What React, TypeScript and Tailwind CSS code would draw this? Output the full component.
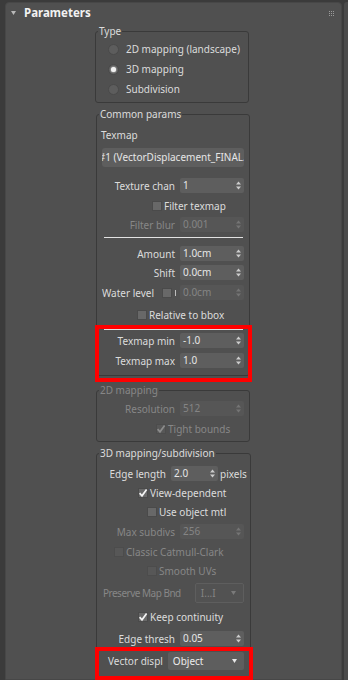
import React from 'react'

// 3ds Max style "Parameters" rollout (Displacement / Vector displacement)

const TXT = 'text-[#dcdcdc]'
const DIM = 'text-[#878787]'

const Arrows = ({ dim = false }: { dim?: boolean }) => (
  <svg width="5" height="9" viewBox="0 0 5 9" className="shrink-0">
    <path d="M0 3.5L2.5 0.5L5 3.5Z" fill={dim ? '#757575' : '#cdcdcd'} />
    <path d="M0 5.5L5 5.5L2.5 8.5Z" fill={dim ? '#757575' : '#cdcdcd'} />
  </svg>
)

const Caret = ({ dim = false }: { dim?: boolean }) => (
  <svg width="5" height="4" viewBox="0 0 5 4" className="shrink-0">
    <path d="M0 0L5 0L2.5 4Z" fill={dim ? '#7a7a7a' : '#e8e8e8'} />
  </svg>
)

const Spinner = ({
  value,
  disabled = false,
  className = 'w-[64px]',
}: {
  value: string
  disabled?: boolean
  className?: string
}) => (
  <div
    className={`${className} h-[15px] shrink-0 flex items-center justify-between pl-[3px] pr-[3px] rounded-[2px] ${
      disabled ? 'bg-[#565656] text-[#858585]' : 'bg-[#5e5e5e] text-[#e6e6e6]'
    }`}
  >
    <span className="leading-[15px] whitespace-nowrap">{value}</span>
    <Arrows dim={disabled} />
  </div>
)

const SpinRow = ({
  label,
  value,
  disabled = false,
  className = '',
}: {
  label: string
  value: string
  disabled?: boolean
  className?: string
}) => (
  <div className={`flex items-center h-[15px] ${className}`}>
    <span className={`w-[74px] text-right leading-[14px] whitespace-nowrap ${disabled ? DIM : TXT}`}>{label}</span>
    <Spinner value={value} disabled={disabled} className="ml-[5px] w-[64px]" />
  </div>
)

const Box = ({ checked = false, disabled = false }: { checked?: boolean; disabled?: boolean }) => (
  <span
    className={`w-[10px] h-[10px] shrink-0 flex items-center justify-center border ${
      disabled ? 'bg-[#575757] border-[#4c4c4c]' : 'bg-[#686868] border-[#4a4a4a]'
    }`}
  >
    {checked && (
      <svg width="10" height="10" viewBox="0 0 10 10" className="shrink-0 overflow-visible">
        <path
          d="M1.6 5.2L4 7.8L8.6 1.6"
          fill="none"
          stroke={disabled ? '#8c8c8c' : '#f4f4f4'}
          strokeWidth="1.7"
        />
      </svg>
    )}
  </span>
)

const CheckRow = ({
  label,
  checked = false,
  disabled = false,
  className = '',
}: {
  label: string
  checked?: boolean
  disabled?: boolean
  className?: string
}) => (
  <div className={`flex items-center h-[14px] ${className}`}>
    <Box checked={checked} disabled={disabled} />
    <span className={`ml-[2px] leading-[14px] whitespace-nowrap ${disabled ? DIM : TXT}`}>{label}</span>
  </div>
)

const RadioRow = ({ label, on = false, className = '' }: { label: string; on?: boolean; className?: string }) => (
  <div className={`flex items-center h-[14px] ${className}`}>
    <span className="w-[11px] h-[11px] rounded-full bg-[#5d5d5d] border border-[#4a4a4a] flex items-center justify-center shrink-0">
      {on && <span className="w-[5px] h-[5px] rounded-full bg-[#f2f2f2] shadow-[0_0_2px_#ffffff]" />}
    </span>
    <span className={`ml-[7px] leading-[14px] whitespace-nowrap ${TXT}`}>{label}</span>
  </div>
)

const Dropdown = ({
  value,
  disabled = false,
  className = '',
}: {
  value: string
  disabled?: boolean
  className?: string
}) => (
  <div
    className={`${className} shrink-0 flex items-center justify-between pl-[5px] pr-[7px] rounded-[2px] ${
      disabled ? 'bg-[#525252] border border-[#5e5e5e] text-[#858585]' : 'bg-[#5e5e5e] text-[#ececec]'
    }`}
  >
    <span className="whitespace-nowrap">{value}</span>
    <Caret dim={disabled} />
  </div>
)

const Group = ({
  title,
  disabled = false,
  className = '',
  children,
}: {
  title: string
  disabled?: boolean
  className?: string
  children?: React.ReactNode
}) => (
  <fieldset className={`w-[154px] border border-[#3a3a3a] rounded-[3px] ${className}`}>
    <legend className={`ml-[2px] px-[1px] leading-[14px] ${disabled ? DIM : TXT}`}>{title}</legend>
    {children}
  </fieldset>
)

const Separator = ({ className = '' }: { className?: string }) => (
  <div className={`h-[1px] ml-[3px] mr-[1px] bg-[#e2e2e2] ${className}`} />
)

const Grip = () => (
  <svg width="5" height="5" viewBox="0 0 5 5" className="shrink-0">
    {[0, 2, 4].map((y) =>
      [0, 2, 4].map((x) => <rect key={`${x}-${y}`} x={x} y={y} width="1" height="1" fill="#9a9a9a" />)
    )}
  </svg>
)

export default function App() {
  return (
    <div className="w-[348px] h-[680px] overflow-hidden bg-[#3b3b3b] flex pt-[2px] font-['Noto_Sans',sans-serif] text-[10px]">
      <div className="w-[5px] shrink-0" />

      {/* rollout panel */}
      <div className="w-[337px] shrink-0 bg-[#505050] border border-[#474747] rounded-t-[4px] flex flex-col pt-[3px]">
        <div className="h-[18px] flex items-center pl-[5px] pr-[7px]">
          <svg width="5" height="4" viewBox="0 0 5 4" className="shrink-0">
            <path d="M0 0L5 0L2.5 4Z" fill="#b9b9b9" />
          </svg>
          <span className="ml-[8px] text-[11.5px] font-bold text-[#f2f2f2] leading-[14px]">Parameters</span>
          <div className="ml-auto">
            <Grip />
          </div>
        </div>

        <div className="ml-[90px] mt-[4px] flex flex-col">
          {/* Type */}
          <Group title="Type" className="-ml-[1px]">
            <div className="flex flex-col pl-[12px] pb-[6px]">
              <RadioRow className="mt-[4px]" label="2D mapping (landscape)" />
              <RadioRow className="mt-[6px]" on label="3D mapping" />
              <RadioRow className="mt-[6px]" label="Subdivision" />
            </div>
          </Group>

          {/* Common params */}
          <Group title="Common params" className="mt-[4px]">
            <div className="flex flex-col pl-[4px] pr-[5px] pb-[7px]">
              <span className={`mt-[7px] leading-[14px] ${TXT}`}>Texmap</span>
              <div className="ml-[1px] mt-[6px] w-[142px] h-[19px] pr-[7px] rounded-[3px] bg-[#5e5e5e] flex items-center justify-center overflow-hidden text-[#e6e6e6]">
                <span className="shrink-0 whitespace-nowrap">Map #1 (VectorDisplacement_FINAL.exr)</span>
              </div>
              <SpinRow className="mt-[11px]" label="Texture chan" value="1" />
              <CheckRow className="mt-[6px] ml-[51px]" label="Filter texmap" />
              <SpinRow className="mt-[4px]" label="Filter blur" value="0.001" disabled />
              <Separator className="mt-[5px]" />
              <SpinRow className="mt-[8px]" label="Amount" value="1.0cm" />
              <SpinRow className="mt-[4px]" label="Shift" value="0.0cm" />
              <div className="mt-[5px] flex items-center h-[15px]">
                <div className="w-[71px] flex items-center">
                  <span className={`pl-[1px] leading-[14px] whitespace-nowrap ${TXT}`}>Water level</span>
                  <span className="ml-auto">
                    <Box />
                  </span>
                </div>
                <span className="ml-[3px] w-[1px] h-[6px] bg-[#bdbdbd]" />
                <Spinner className="ml-[4px] w-[64px]" value="0.0cm" disabled />
              </div>
              <CheckRow className="mt-[8px] ml-[36px]" label="Relative to bbox" />

              <div className="relative flex flex-col">
                <Separator className="mt-[7px]" />
                <SpinRow className="mt-[3px]" label="Texmap min" value="-1.0" />
                <SpinRow className="mt-[5px]" label="Texmap max" value="1.0" />
                <div className="pointer-events-none absolute -left-[6px] -right-[8px] top-[3px] -bottom-[14px] border-4 border-[#ff0000]" />
              </div>
            </div>
          </Group>

          {/* 2D mapping (disabled) */}
          <Group title="2D mapping" disabled className="mt-[7px]">
            <div className="flex flex-col pl-[4px] pr-[5px] pb-[5px]">
              <SpinRow className="mt-[4px]" label="Resolution" value="512" disabled />
              <CheckRow className="mt-[6px] ml-[55px]" label="Tight bounds" checked disabled />
            </div>
          </Group>

          {/* 3D mapping/subdivision */}
          <Group title="3D mapping/subdivision" className="mt-[4px]">
            <div className="flex flex-col pl-[4px] pr-[5px] pb-[24px]">
              <div className="mt-[6px] -mr-[2px] flex items-center h-[15px] overflow-hidden">
                <span className={`w-[65px] shrink-0 text-right leading-[14px] whitespace-nowrap ${TXT}`}>Edge length</span>
                <Spinner className="ml-[5px] w-[47px]" value="2.0" />
                <span className={`ml-[2px] leading-[14px] whitespace-nowrap ${TXT}`}>pixels</span>
              </div>
              <CheckRow className="mt-[5px] ml-[37px]" label="View-dependent" checked />
              <CheckRow className="mt-[5px] ml-[46px]" label="Use object mtl" />
              <SpinRow className="mt-[5px]" label="Max subdivs" value="256" disabled />
              <CheckRow className="mt-[6px] ml-[13px]" label="Classic Catmull-Clark" disabled />
              <CheckRow className="mt-[5px] ml-[46px]" label="Smooth UVs" disabled />
              <div className="mt-[5px] flex items-center h-[20px]">
                <span className={`ml-[2px] tracking-[-0.5px] leading-[14px] whitespace-nowrap ${DIM}`}>Preserve Map Bnd</span>
                <Dropdown className="ml-auto mr-[1px] w-[49px] h-[20px]" value="I...I" disabled />
              </div>
              <CheckRow className="mt-[7px] ml-[37px]" label="Keep continuity" checked />
              <SpinRow className="mt-[7px]" label="Edge thresh" value="0.05" />
              <div className="relative mt-[6px] flex items-center h-[18px]">
                <span className={`ml-[7px] leading-[14px] whitespace-nowrap ${TXT}`}>Vector displ</span>
                <Dropdown className="ml-auto mr-[1px] w-[76px] h-[18px]" value="Object" />
                <div className="pointer-events-none absolute -left-[6px] -right-[8px] -top-[5px] -bottom-[10px] border-4 border-[#ff0000]" />
              </div>
            </div>
          </Group>
        </div>
      </div>

      <div className="w-[2px] shrink-0" />
      <div className="flex-1 bg-[#4b4b4b] rounded-tl-[3px]" />
    </div>
  )
}
